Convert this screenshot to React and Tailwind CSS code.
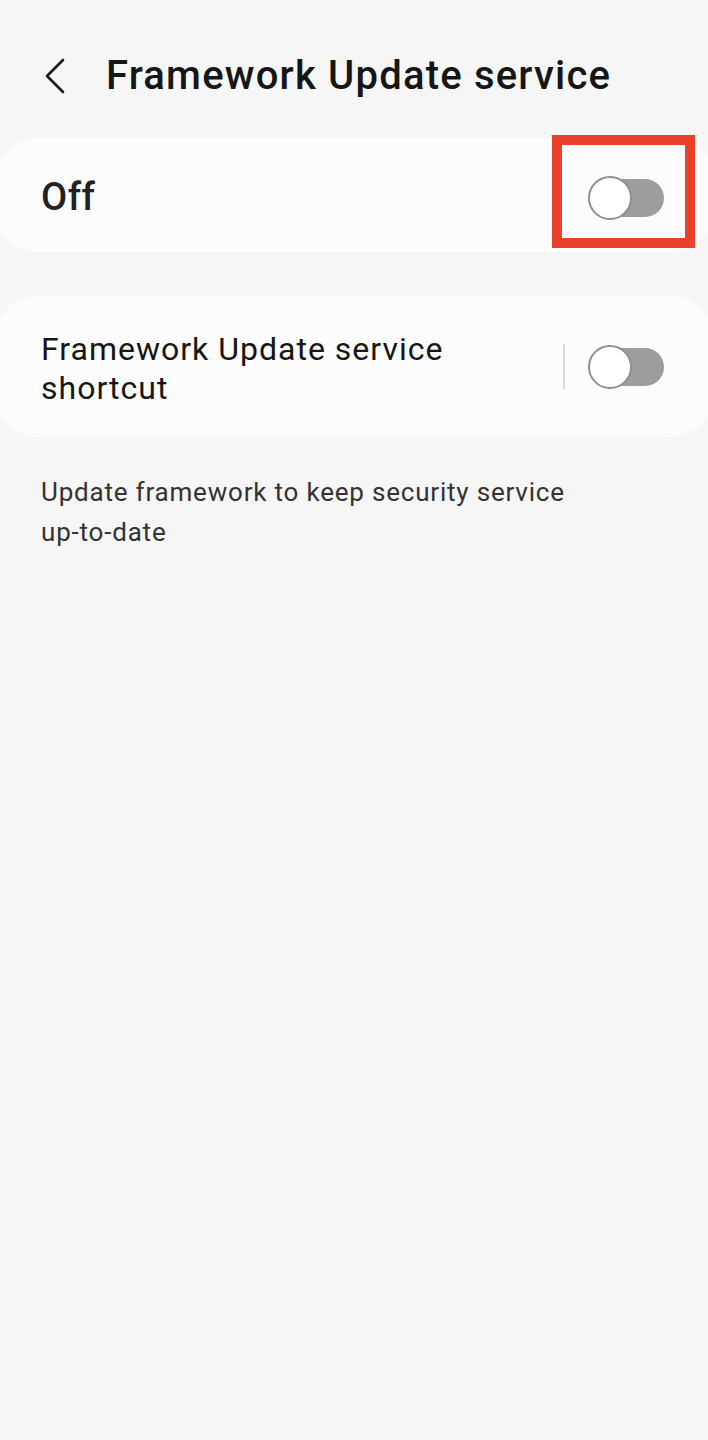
import React from 'react';

const Toggle = () => (
  <div className="relative w-[76px] h-[44px] shrink-0">
    <div className="absolute right-0 top-[3px] h-[38px] w-[70px] rounded-full bg-[#9d9d9d]" />
    <div className="absolute left-0 top-0 h-[44px] w-[44px] rounded-full bg-white border-2 border-[#8f8f8f]" />
  </div>
);

export default function App() {
  return (
    <div
      className="min-h-screen w-full overflow-hidden bg-[#f6f6f6] text-[#161616]"
      style={{ fontFamily: 'Roboto, "Noto Sans", sans-serif' }}
    >
      {/* header */}
      <div className="flex items-center h-[48px] mt-[52px] pl-[44px]">
        <svg width="22" height="36" viewBox="0 0 22 36" fill="none" className="shrink-0">
          <path d="M19 2 L3 18 L19 34" stroke="#1a1a1a" strokeWidth="2.6" strokeLinecap="round" strokeLinejoin="round" />
        </svg>
        <h1 className="ml-[40px] text-[40px] leading-[48px] font-medium tracking-[1.2px]">
          Framework Update service
        </h1>
      </div>

      {/* master switch */}
      <div className="relative mt-[38px] -mx-[6px] h-[114px] rounded-[44px] bg-[#fcfcfc] flex items-center justify-between pl-[47px] pr-[50px] pt-[5px]">
        <span className="text-[38px] font-medium text-[#222] tracking-[0.5px]">Off</span>
        <Toggle />
        <div className="absolute left-[558px] top-[-3px] w-[143px] h-[113px] border-[10px] border-[#e9412b]" />
      </div>

      {/* shortcut */}
      <div className="mt-[44px] -mx-[6px] h-[141px] rounded-[44px] bg-[#fcfcfc] flex items-center pl-[47px] pr-[50px]">
        <div className="w-[500px] text-[32px] leading-[39px] tracking-[1px] text-[#161616] pt-[4px]">
          Framework Update service shortcut
        </div>
        <div className="ml-auto h-[45px] w-[2px] bg-[#dcdcdc]" />
        <div className="ml-[23px]">
          <Toggle />
        </div>
      </div>

      <p className="mt-[35px] ml-[41px] w-[580px] text-[26px] leading-[40px] tracking-[0.8px] text-[#333]">
        Update framework to keep security service <span className="whitespace-nowrap">up-to-date</span>
      </p>
    </div>
  );
}
